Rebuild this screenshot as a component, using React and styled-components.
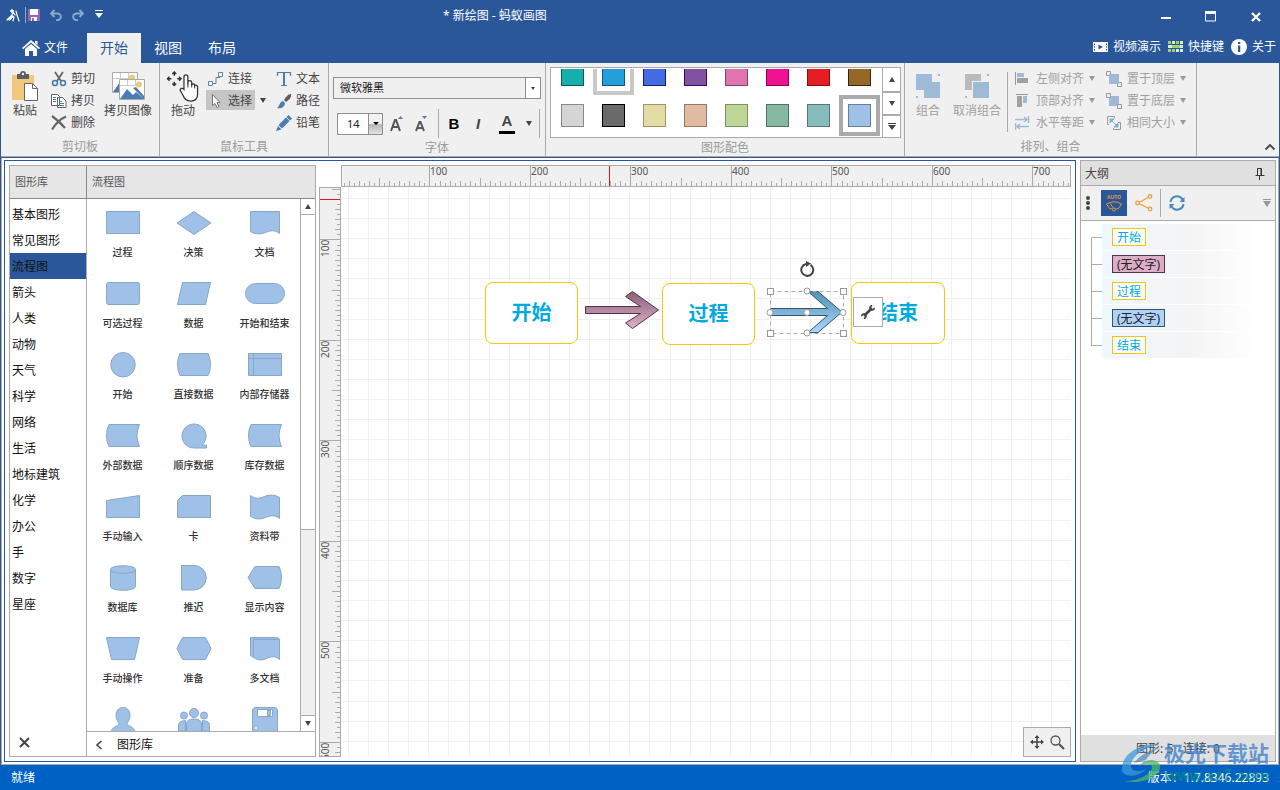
import { useEffect, useState } from "react";
import styled, { createGlobalStyle, css } from "styled-components";

const GlobalStyle = createGlobalStyle`
  *, *::before, *::after {
    box-sizing: border-box;
  }
  body {
    margin: 0;
    background: #fff;
  }
  body, button, select {
    font-family: "Noto Sans", "Noto Sans CJK SC", sans-serif;
    font-size: 12px;
    line-height: 16px;
    color: #444;
  }
  button {
    border: 0;
    padding: 0;
    margin: 0;
    background: none;
    cursor: pointer;
    white-space: nowrap;
  }
  svg {
    display: block;
    flex: none;
  }
`;

const BLUE = "#2a5799";
const LINE = "#ababab";
const FILL = "#a0c1e7";
const FILL_EDGE = "#88a6c8";

const Window = styled.div`
  height: 100vh;
  display: flex;
  flex-direction: column;
  position: relative;
  overflow: hidden;
`;

const Header = styled.header`
  background: ${BLUE};
  color: #fff;
`;

const TitleBar = styled.div`
  height: 33px;
  display: grid;
  grid-template-columns: 443px 1fr auto;
  align-items: center;
`;

const QuickBar = styled.div`
  display: flex;
  align-items: center;
  gap: 10px;
  padding: 0 0 4px 5px;
`;

const QuickGroup = styled.div`
  display: flex;
  align-items: center;
  gap: 2px;
`;

const Divider = styled.span`
  width: 1px;
  height: ${(p) => p.$h}px;
  margin: ${(p) => p.$m || "0"};
  background: ${(p) => p.$color || LINE};
  flex: none;
`;

const Title = styled.h1`
  margin: 0;
  padding-bottom: 2px;
  font-size: 12px;
  font-weight: 400;
`;

const WindowButtons = styled.div`
  display: flex;
  padding-right: 2px;
  button {
    width: 45px;
    height: 33px;
    display: grid;
    place-items: center;
  }
`;

const TabBar = styled.nav`
  display: flex;
  height: 30px;
`;

const FileTab = styled.button`
  width: 87px;
  display: flex;
  align-items: center;
  padding-left: 22px;
  gap: 4px;
  color: #fff;
`;

const Tab = styled.button`
  width: 54px;
  font-size: 14px;
  color: ${(p) => (p.$active ? BLUE : "#fff")};
  background: ${(p) => (p.$active ? "#f0f0f0" : "transparent")};
`;

const HelpLinks = styled.div`
  margin-left: auto;
  display: flex;
  gap: 7px;
  padding: 0 4px 3px 0;
  a {
    display: flex;
    align-items: center;
    gap: 5px;
    color: #fff;
    text-decoration: none;
  }
`;

const Ribbon = styled.section`
  display: flex;
  background: #f0f0f0;
  border: solid ${BLUE};
  border-width: 0 1px;
  box-shadow: inset 0 -2px ${LINE};
  height: 95px;
  padding-bottom: 2px;
  flex: none;
`;

const Group = styled.div`
  width: ${(p) => p.$w}px;
  border-right: 1px solid ${LINE};
  display: flex;
  flex-direction: column;
`;

const GroupBody = styled.div`
  height: 75px;
  display: flex;
  padding: ${(p) => p.$pad || "0 0 0 4px"};
`;

const GroupLabel = styled.div`
  text-align: center;
  color: #9b9b9b;
  line-height: 18px;
  padding-top: 1px;
`;

const BigButton = styled.button`
  width: ${(p) => p.$w}px;
  margin-right: ${(p) => p.$mr || 0}px;
  flex: none;
  display: flex;
  flex-direction: column;
  align-items: center;
  align-self: flex-start;
  padding-top: 8px;
  &:disabled {
    color: #a0a0a0;
  }
`;

const Stack = styled.div`
  display: flex;
  flex-direction: column;
  align-items: flex-start;
  gap: 2px;
  padding-top: 5px;
  margin-right: ${(p) => p.$mr || 0}px;
`;

const StackRow = styled.div`
  display: flex;
  align-items: center;
`;

const SmallButton = styled.button`
  height: 20px;
  display: flex;
  align-items: center;
  gap: ${(p) => p.$gap || 4}px;
  padding: 1px 3px 0 2px;
  background: ${(p) => (p.$active ? "#c5c5c5" : "transparent")};
  &:disabled {
    color: #a0a0a0;
  }
`;

const Caret = styled.span`
  display: inline-block;
  width: ${(p) => 2 * (p.$s || 3)}px;
  border: ${(p) => p.$s || 3}px solid transparent;
  ${(p) =>
    p.$up
      ? css`
          border-top: 0;
          border-bottom: ${p.$h || 5}px solid ${p.$color || "#444"};
        `
      : css`
          border-bottom: 0;
          border-top: ${p.$h || 5}px solid ${p.$color || "#444"};
        `}
`;

const CaretButton = styled.button`
  width: ${(p) => p.$w}px;
  height: 20px;
  line-height: 0;
`;

const FontBody = styled.div`
  display: flex;
  flex-direction: column;
  gap: 10px;
  padding: 14px 4px 0;
  height: 75px;
`;

const Combo = styled.div`
  display: flex;
  width: ${(p) => p.$w}px;
  height: 22px;
  border: 1px solid #8e8e8e;
  select {
    flex: 1;
    appearance: none;
    border: 0;
    outline: 0;
    margin: 0;
    padding: 0 0 0 ${(p) => p.$pad}px;
    font-size: 11px;
    color: #222;
    background: ${(p) => p.$bg};
  }
`;

const ComboArrow = styled.span`
  width: ${(p) => p.$w}px;
  display: grid;
  place-items: center;
  border-left: 1px solid #8e8e8e;
  background: ${(p) => p.$bg};
  pointer-events: none;
`;

const FontRow = styled.div`
  display: flex;
  align-items: center;
  height: 29px;
  padding-left: 4px;
`;

const FontButton = styled.button`
  width: ${(p) => p.$w || 24}px;
  height: 24px;
  display: grid;
  place-items: center;
  font-family: "Liberation Sans", sans-serif;
  font-size: 15px;
  font-weight: 700;
  font-style: ${(p) => (p.$italic ? "italic" : "normal")};
  color: ${(p) => p.$color || "#444"};
`;

const Gallery = styled.div`
  flex: 1;
  display: flex;
  height: 71px;
  border: 1px solid ${LINE};
  background: #fff;
`;

const Swatches = styled.div`
  flex: 1;
  display: grid;
  grid-template-columns: repeat(8, 41px);
  grid-auto-rows: 41px;
  align-content: end;
  margin: 1px;
  overflow: hidden;
`;

const Swatch = styled.button`
  display: grid;
  place-items: center;
  border: 4px solid ${(p) => p.$ring || "transparent"};
  &::before {
    content: "";
    width: 23px;
    height: 23px;
    background: ${(p) => p.$color};
    border: 1px solid ${(p) => p.$edge};
  }
`;

const GalleryScroll = styled.div`
  width: 18px;
  display: grid;
  grid-template-rows: repeat(3, 1fr);
  border-left: 1px solid ${LINE};
  button {
    display: flex;
    flex-direction: column;
    align-items: center;
    justify-content: center;
    gap: 1px;
  }
  button + button {
    border-top: 2px solid ${LINE};
  }
`;

const Collapse = styled.button`
  margin-left: auto;
  width: 18px;
  height: 18px;
  align-self: flex-end;
  display: grid;
  place-items: center;
`;

const Work = styled.main`
  flex: 1;
  min-height: 0;
  display: flex;
  gap: 4px;
  padding: 2px;
  background: #fff;
  border: 1px solid ${LINE};
  border-top: 0;
  margin: 0 1px;
  box-shadow: 0 0 0 1px ${BLUE};
`;

const DocFrame = styled.div`
  flex: 1;
  min-width: 0;
  display: flex;
  gap: 3px;
  padding: 4px;
  border: 1px solid ${BLUE};
`;

const Library = styled.aside`
  width: 307px;
  flex: none;
  display: grid;
  grid-template-columns: 76px 1fr;
  grid-template-rows: 33px 1fr;
  border: 1px solid ${LINE};
`;

const LibraryHead = styled.h2`
  margin: 0;
  padding-left: 5px;
  font-size: 11px;
  font-weight: 400;
  line-height: 32px;
  color: #555;
  background: #e6e6e6;
  border-bottom: 1px solid #8a8a8a;
  & + & {
    border-left: 1px solid #8a8a8a;
  }
`;

const CategoryPane = styled.div`
  display: flex;
  flex-direction: column;
  justify-content: space-between;
  padding-top: 2px;
  min-height: 0;
`;

const Category = styled.button`
  display: block;
  width: 100%;
  height: 26px;
  padding: 2px 0 0 2px;
  text-align: left;
  color: #111;
  background: ${(p) => (p.$active ? BLUE : "transparent")};
`;

const ClosePane = styled.button`
  width: 28px;
  height: 28px;
  display: grid;
  place-items: center end;
  padding-right: 8px;
`;

const ShapePane = styled.div`
  display: flex;
  flex-direction: column;
  min-height: 0;
  border-left: 1px solid ${LINE};
`;

const ShapeArea = styled.div`
  flex: 1;
  min-height: 0;
  display: flex;
`;

const ShapeGrid = styled.div`
  flex: 1;
  display: grid;
  grid-template-columns: repeat(3, 71px);
  grid-auto-rows: 71px;
  overflow: hidden;
`;

const ShapeButton = styled.button`
  display: flex;
  flex-direction: column;
  align-items: center;
  gap: 7px;
  padding-top: 10px;
  font-size: 10px;
  font-weight: 500;
  color: #333;
  svg {
    fill: ${FILL};
    stroke: ${FILL_EDGE};
  }
`;

const ScrollBar = styled.div`
  width: 15px;
  display: flex;
  flex-direction: column;
  border-left: 1px solid ${LINE};
  background: #f0f0f0;
  button {
    height: 15px;
    line-height: 0;
    background: #fff;
  }
`;

const ScrollTrack = styled.div`
  flex: 1;
  border: solid ${LINE};
  border-width: 1px 0;
  &::before {
    content: "";
    display: block;
    height: 63%;
    background: #fff;
    border-bottom: 1px solid ${LINE};
  }
`;

const LibraryFoot = styled.button`
  height: 25px;
  display: flex;
  align-items: center;
  gap: 14px;
  padding: 1px 0 0 8px;
  border-top: 1px solid ${LINE};
  color: #111;
`;

const Editor = styled.div`
  flex: 1;
  min-width: 0;
  display: grid;
  grid-template-columns: 22px 1fr;
  grid-template-rows: 22px 1fr;
`;

const RulerBox = styled.div`
  grid-column: ${(p) => (p.$vertical ? 1 : 2)};
  background: #f0f0f0;
  border: 1px solid ${LINE};
  overflow: hidden;
  min-height: 0;
  text {
    font-size: 10px;
    fill: #555;
  }
`;

const Canvas = styled.div`
  position: relative;
  overflow: hidden;
  min-height: 0;
`;

const CanvasItem = styled.div`
  position: absolute;
  left: ${(p) => p.$x}px;
  top: ${(p) => p.$y}px;
`;

const FlowBox = styled(CanvasItem)`
  width: ${(p) => p.$w || 93}px;
  height: 62px;
  display: grid;
  place-items: center;
  border: 1px solid #f0c808;
  border-radius: 8px;
  background: #fff;
  font-size: 20px;
  line-height: 28px;
  font-weight: 700;
  color: #00aade;
`;

const ToolTag = styled.button`
  position: absolute;
  left: 512px;
  top: 110px;
  width: 30px;
  height: 30px;
  display: grid;
  place-items: center;
  background: #fff;
  border: 1px solid ${LINE};
`;

const ViewTools = styled.div`
  position: absolute;
  right: 0;
  bottom: 0;
  width: 48px;
  height: 30px;
  display: flex;
  align-items: center;
  justify-content: center;
  gap: 6px;
  background: #f0f0f0;
  border: 1px solid ${LINE};
`;

const Outline = styled.aside`
  width: 196px;
  flex: none;
  display: flex;
  flex-direction: column;
  border: 1px solid ${LINE};
`;

const OutlineHead = styled.div`
  height: 25px;
  display: flex;
  align-items: center;
  justify-content: space-between;
  padding: 1px 10px 0 4px;
  background: #e0e0e0;
  border-bottom: 1px solid ${LINE};
  h2 {
    margin: 0;
    font-size: 12px;
    font-weight: 400;
  }
`;

const OutlineTools = styled.div`
  height: 35px;
  display: flex;
  align-items: center;
  background: #f0f0f0;
  border-bottom: 1px solid ${LINE};
  padding: 0 4px;
`;

const ToolButton = styled.button`
  width: 26px;
  height: 26px;
  display: grid;
  place-items: center;
  background: ${(p) => (p.$active ? BLUE : "transparent")};
`;

const Overflow = styled.button`
  margin-left: auto;
  width: 9px;
  display: flex;
  flex-direction: column;
  gap: 1px;
  align-items: center;
  &::before {
    content: "";
    width: 8px;
    height: 1px;
    background: #999;
  }
`;

const Tree = styled.ul`
  flex: 1;
  margin: 0;
  padding: 3px 0 0 10px;
  list-style: none;
`;

const TreeItem = styled.li`
  display: flex;
  height: 27px;
`;

const Branch = styled.span`
  width: 11px;
  display: flex;
  flex-direction: column;
  &::before,
  &::after {
    content: "";
    border-left: 1px solid ${LINE};
  }
  &::before {
    height: 14px;
    border-bottom: 1px solid ${LINE};
  }
  &::after {
    height: 13px;
  }
  ${TreeItem}:first-child &::before,
  ${TreeItem}:last-child &::after {
    border-left-color: transparent;
  }
`;

const TreeRow = styled.div`
  flex: 1;
  height: 26px;
  display: flex;
  align-items: center;
  padding-left: 10px;
  background: linear-gradient(90deg, #f0f8ff, #f4f4f4 50%, #fff 90%);
`;

const Tag = styled.button`
  height: 18px;
  padding: 1px 4px 0;
  line-height: 15px;
  color: ${(p) => p.$text};
  background: ${(p) => p.$bg};
  border: 1px solid ${(p) => p.$edge};
`;

const OutlineFoot = styled.div`
  height: 26px;
  line-height: 28px;
  text-align: center;
  white-space: pre;
  background: #e0e0e0;
`;

const StatusBar = styled.footer`
  height: 25px;
  flex: none;
  display: flex;
  align-items: center;
  justify-content: space-between;
  padding: 0 11px;
  color: #fff;
  background: #0061c4;
`;

const Watermark = styled.div`
  position: absolute;
  right: 11px;
  bottom: 5px;
  display: flex;
  align-items: flex-end;
  pointer-events: none;
`;

const WatermarkText = styled.div`
  text-align: right;
  white-space: nowrap;
  strong {
    display: block;
    font-size: 21px;
    line-height: 28px;
    color: rgba(62, 130, 205, 0.8);
  }
  span {
    display: block;
    font-family: "Liberation Sans", sans-serif;
    font-size: 16px;
    line-height: 18px;
    font-weight: 700;
    color: rgba(0, 145, 130, 0.65);
  }
`;

const Svg = ({ w = 16, h = w, box, children, ...rest }) => (
  <svg
    width={w}
    height={h}
    viewBox={box || `0 0 ${w} ${h}`}
    fill="none"
    aria-hidden="true"
    {...rest}
  >
    {children}
  </svg>
);

const AntIcon = () => (
  <Svg w={16} stroke="#fff" strokeLinecap="round">
    <path d="M6 4l2 1 2 3M8 6l-2 3-4 4M7 9l2 1-1 4M11 4l1 4 2 6" strokeWidth="1.2" />
    <circle cx="7" cy="4" r="1.3" fill="#fff" />
    <path d="M3 12l4-4 1 2-3 3z" fill="#fff" />
  </Svg>
);

const SaveIcon = () => (
  <Svg w={12}>
    <path d="M0 0h12v12H0z" fill="#9b63b5" />
    <path d="M2 0h8v6H2zM3 8h6v4H3z" fill="#fff" />
    <path d="M4 9h2v3H4z" fill="#9b63b5" />
  </Svg>
);

const UndoIcon = ({ flip }) => (
  <Svg w={12} stroke="#8fa9d0" strokeWidth="1.8">
    <g transform={flip ? "matrix(-1 0 0 1 12 0)" : undefined}>
      <path d="M4.5 1L1 4.5 4.5 8M1 4.5h6.5a3.3 3.3 0 0 1 0 6.7H6" />
    </g>
  </Svg>
);

const HomeIcon = () => (
  <Svg w={18} h={16}>
    <path d="M9 0l9 8-1.2 1.3L9 2.6 1.2 9.3 0 8zM13 1h2.5v4L13 3z" fill="#fff" />
    <path d="M9 4l6 5v7h-4v-5H7v5H3V9z" fill="#fff" />
  </Svg>
);

const VideoIcon = () => (
  <Svg w={15} h={12}>
    <path d="M0 1h15v10H0z" fill="#fff" />
    <path d="M1.5 2.5v7M13.5 2.5v7" stroke={BLUE} strokeDasharray="1.5 1.2" />
    <path d="M5.5 3.5l4.5 2.5-4.500 2.500z" fill={BLUE} />
  </Svg>
);

const KeysIcon = () => (
  <Svg w={15} h={12}>
    {[0, 4, 8].map((y, row) =>
      [0, 4, 8, 12].map((x, col) => (
        <rect
          key={`${x}-${y}`}
          x={x}
          y={y}
          width={row === 1 ? 4 : 3}
          height="3"
          fill={col > 2 || (row + col) % 3 === 1 ? "#e3ead9" : "#9fd267"}
        />
      ))
    )}
  </Svg>
);

const InfoIcon = () => (
  <Svg w={16}>
    <circle cx="8" cy="8" r="8" fill="#fff" />
    <path d="M7 6.5h2.3V13H7zM7 3h2.3v2H7z" fill={BLUE} />
  </Svg>
);

const PasteIcon = () => (
  <Svg w={32}>
    <path d="M3 4h22v25H3z" fill="#efc77d" />
    <path d="M8 3h3a3 3 0 0 1 6 0h3v5H8z" fill="#5e5e5e" />
    <circle cx="14" cy="3" r="1.2" fill="#f0f0f0" />
    <path d="M15.5 12.5h8l5 5v12h-13z" fill="#fff" stroke="#666" />
    <path d="M23.5 12.5v5h5" stroke="#666" />
  </Svg>
);

const CutIcon = () => (
  <Svg w={16}>
    <path d="M4 1l6 9M12 1L6 10" stroke="#666" strokeWidth="1.8" />
    <circle cx="4" cy="12" r="2.500" stroke="#4878ad" strokeWidth="1.5" />
    <circle cx="12" cy="12" r="2.500" stroke="#4878ad" strokeWidth="1.5" />
  </Svg>
);

const CopyIcon = () => (
  <Svg w={16} stroke="#666" fill="#fff">
    <path d="M.5 1.5h6l2 2v9h-8zM6.500 4.500h5l3.500 3.500v6.500H6.500z" />
    <path d="M2 4.500h3M2 6.500h3M2 8.500h3M8 8.500h3M8 10.500h5M8 12.500h5" stroke="#4878ad" />
  </Svg>
);

const DeleteIcon = () => (
  <Svg w={16}>
    <path d="M1 1q7 5 13 12M15 1.500Q7 5 1 14.500" stroke="#666" strokeWidth="2.200" />
  </Svg>
);

const PictureCopyIcon = () => (
  <Svg w={34} h={32}>
    {[0, 7].map((o) => (
      <g key={o} transform={`translate(${o} ${o})`}>
        <path d="M1.5 1.5h25v20h-25z" fill="#fff" stroke="#aaa" />
        <path d="M9.5 2v6M17.5 2v5M2 7.5h20" stroke="#ccc" />
        <circle cx="21" cy="6.500" r="3" fill="#efc77d" />
        <path d="M2 21l7-10 6 6 3-3 8 7zM15 10l3-1 8 9v3z" fill="#4a7cb3" />
      </g>
    ))}
  </Svg>
);

const HandIcon = () => (
  <Svg w={34} h={32} box="0 0 34 33">
    <path
      d="M8 1v4M8 11v4M1 8h4M11 8h4M6 3l2-2 2 2M6 13l2 2 2-2M3 6L1 8l2 2M13 6l2 2-2 2"
      stroke="#333"
      strokeWidth="1.500"
    />
    <path
      d="M18 19V6a2 2 0 0 1 4 0v8-2a2 2 0 0 1 4 0v2a2 2 0 0 1 3 0v1a2 2 0 0 1 3 1v8c0 5-3 7-7 7-5 0-7-3-8-6l-3-5c0-2 2-3 4-1z"
      fill="#fff"
      stroke="#333"
      strokeWidth="1.300"
    />
    <path d="M22 13v4M26 14v3M29 15v3" stroke="#333" />
  </Svg>
);

const ConnectIcon = () => (
  <Svg w={16}>
    <path d="M4 12.5h4v-6h4v-2" stroke="#777" />
    <path d="M.5 10.5h4v4h-4zM10.5 1.5h4v4h-4z" fill="#fff" stroke="#4f8cb0" />
  </Svg>
);

const PointerIcon = () => (
  <Svg w={16}>
    <path d="M4.5 1.5v11l2.5-2 2 4 2-1-2-4h3z" fill="#fff" stroke="#777" />
  </Svg>
);

const TextIcon = () => (
  <Svg w={16}>
    <path d="M1.500 5V1.500h13V5M5 14.500h6" stroke="#4a7cb3" strokeWidth="1.200" />
    <path d="M8 2v13" stroke="#4a7cb3" strokeWidth="2" />
  </Svg>
);

const BrushIcon = () => (
  <Svg w={16}>
    <path d="M15 1c1 3-2 6-5 8L8 7c2-3 4-6 7-6z" fill="#5e5e5e" />
    <path d="M7 8l2 2c0 4-4 6-8 5 3-2 2-6 6-7z" fill="#4a7cb3" />
  </Svg>
);

const PencilIcon = () => (
  <Svg w={16}>
    <path d="M12.500 0l3.500 3.500-2 2L10.500 2zM10 2.500L13.500 6 6 13.500 2.500 10zM2 11l3.500 3.500L0 16z" fill="#4a7cb3" />
  </Svg>
);

const FontSizeIcon = ({ up }) => (
  <Svg w={18} h={18}>
    <path
      d={up ? "M3 16L7 5h1l4 11M4.5 12h6" : "M4 16l3.500-9h1L12 16M5 13h6"}
      stroke="#555"
      strokeWidth="2"
    />
    <path d={up ? "M10 4l2.500-3L15 4z" : "M10 1l2.500 3L15 1z"} fill="#4a7cb3" />
  </Svg>
);

const FontColorIcon = () => (
  <Svg w={16} h={4}>
    <path d="M0 0h16v3H0z" fill="#000" />
  </Svg>
);

const GroupIcon = () => (
  <Svg w={24} h={32}>
    <path d="M0 3h16v8h8v16H8v-8H0zM22 3h2v2h-2zM0 25h2v2H0z" fill="#9fbad7" />
  </Svg>
);

const UngroupIcon = () => (
  <Svg w={24} h={32}>
    <path d="M0 3h16v7H7v9H0z" fill="#bbb" />
    <path d="M8 11h16v16H8zM22 3h2v2h-2zM0 25h2v2H0z" fill="#9fbad7" />
  </Svg>
);

const ARRANGE_ICONS = {
  left: (
    <>
      <path d="M.5 1v13" stroke="#999" />
      <path d="M2 2h7v4H2z" fill="#9fbad7" />
      <path d="M2 7h11v5H2z" fill="#a0a0a0" />
    </>
  ),
  top: (
    <>
      <path d="M1 1.5h12" stroke="#999" />
      <path d="M2 3h5v11H2z" fill="#a0a0a0" />
      <path d="M8 3h4v7H8z" fill="#9fbad7" />
    </>
  ),
  space: (
    <path
      d="M0 4.5h12M9 2l3 2.500L9 7M14 11.500H2M5 9l-3 2.500L5 14M13.500 1v7M.5 8v7"
      stroke="#9fbad7"
      strokeWidth="1.500"
    />
  ),
  front: (
    <>
      <path d="M.5.5h4v4h-4zM11.5 11.5h4v4h-4z" stroke="#999" />
      <path d="M3 3h10v10H3z" fill="#9fbad7" />
    </>
  ),
  back: (
    <>
      <path d="M3 3h10v10H3z" fill="#9fbad7" />
      <path d="M.5.5h4v4h-4zM11.5 11.5h4v4h-4z" fill="#f0f0f0" stroke="#999" />
    </>
  ),
  same: (
    <>
      <path d="M8.500 3V1.500H1.500v8H3M12 7.500h2.500v7h-7V13" stroke="#999" />
      <path d="M4 4h4L4 8zM12 12V8l-4 4zM6 6l4 4" fill="#7fb0d8" stroke="#7fb0d8" />
    </>
  ),
};

const RotateIcon = () => (
  <Svg w={16}>
    <path d="M11.5 3.8A6 6 0 1 1 7 3" stroke="#444" strokeWidth="2" />
    <path d="M7 0l5 2.5L7 6z" fill="#444" />
  </Svg>
);

const WrenchIcon = () => (
  <Svg w={16}>
    <path d="M4.500 11.500l7-7" stroke="#444" strokeWidth="2.600" />
    <path
      d="M15 3.500l-2.500 1.200-1.200-1.200L12.500 1C10 .8 8.500 3 9.500 5l1.500 1.500c2 1 4.300-.5 4-3zM1 12.500l2.500-1.200 1.200 1.200L3.500 15c2.500.2 4-2 3-4L5 9.500c-2-1-4.300.5-4 3z"
      fill="#444"
    />
  </Svg>
);

const MoveIcon = () => (
  <Svg w={14}>
    <path d="M7 1v12M1 7h12" stroke="#444" strokeWidth="1.500" />
    <path d="M7 0l2.500 3h-5zM7 14l2.500-3h-5zM0 7l3-2.500v5zM14 7l-3-2.500v5z" fill="#444" />
  </Svg>
);

const LensIcon = () => (
  <Svg w={15} stroke="#555">
    <circle cx="5.5" cy="5.5" r="4.5" strokeWidth="1.300" />
    <path d="M9 9l5 5" strokeWidth="2.200" />
  </Svg>
);

const PinIcon = () => (
  <Svg w={10} h={12} stroke="#333">
    <path d="M2.500 7V.500h4V7M.5 7.500h9M4.500 8v4" />
    <path d="M6 1v6" />
  </Svg>
);

const WiperIcon = () => (
  <Svg w={18} h={20} stroke="#e8923a">
    <path d="M1.500 11q7.500-4.500 15 0l-3 4.500-3 .5M1.500 11l3 4.500 3 .5M5.500 10.500l3.500 6" />
    <circle cx="9" cy="16.500" r="1.500" fill={BLUE} />
    <text x="9" y="6" fontSize="5" fontWeight="700" textAnchor="middle" fill="#e8923a" stroke="none">
      AUTO
    </text>
  </Svg>
);

const ShareIcon = () => (
  <Svg w={18} stroke="#f59a3c" strokeWidth="1.2">
    <path d="M4 8.5L14 3M4 9.5l10 5" />
    <circle cx="2.5" cy="9" r="1.8" />
    <circle cx="15" cy="2.5" r="1.8" />
    <circle cx="15" cy="15" r="1.8" />
  </Svg>
);

const RefreshIcon = () => (
  <Svg w={16} stroke="#4a88c0" strokeWidth="2">
    <path d="M1.5 7a6.5 6.5 0 0 1 12-2.500M14.500 9a6.500 6.500 0 0 1-12 2.500" />
    <path d="M15.500 2v5h-5zM.5 14V9h5z" fill="#4a88c0" stroke="none" />
  </Svg>
);

const FONTS = ["微软雅黑", "宋体", "黑体"];
const SIZES = [12, 14, 16, 18, 20];

const COLORS = [
  ["#18aeac", "#0b5957"],
  ["#259fdc", "#145578", "#c8c8c8"],
  ["#456be2", "#0e1f78"],
  ["#8052a0", "#350a60"],
  ["#e074ae", "#8a3f68"],
  ["#f01391", "#8c0553"],
  ["#e61e24", "#8c0c10"],
  ["#966828", "#3c270a"],
  ["#d6d5d6", "#8a898a"],
  ["#6a6a6a", "#000"],
  ["#e5dba5", "#9b946e"],
  ["#e0baa1", "#93796a"],
  ["#bdd697", "#7e9362"],
  ["#85b8a0", "#507363"],
  ["#87bcbc", "#527979"],
  [FILL, "#66809c", LINE],
];

const CATEGORIES = [
  "基本图形", "常见图形", "流程图", "箭头", "人类", "动物", "天气", "科学",
  "网络", "生活", "地标建筑", "化学", "办公", "手", "数字", "星座",
];

const STORED = "M6 2.5H36.5Q34 8 34 13.5T36.5 24.5H6Q3.5 20 3.5 13.5T6 2.5Z";

const SHAPES = [
  ["过程", "M3.5 2.5h33v22h-33z"],
  ["决策", "M3 14L20 2.5 37 14 20 25.5z"],
  ["文档", "M5.5 2.5h29v22c-5-4-9-3-14-1s-11 2-15-1z"],
  ["可选过程", "M5.5 2.5h29q2 0 2 2v18q0 2-2 2h-29q-2 0-2-2v-18q0-2 2-2z"],
  ["数据", "M8.5 2.5H36.5L31.5 24.5H3.5z"],
  ["开始和结束", "M10.5 3.5h19a10 10 0 0 1 0 20h-19a10 10 0 0 1 0-20z"],
  ["开始", "M20 1.5a12 12 0 0 1 0 24.5a12 12 0 0 1 0-24.5z"],
  ["直接数据", "M6 2.5H34Q36.5 7 36.5 13.5T34 24.5H6Q3.5 20 3.5 13.5T6 2.5Z"],
  ["内部存储器", "M3.5 2.5h33v22h-33zM8.5 2.5v22M3.5 7.5h33"],
  ["外部数据", STORED],
  ["顺序数据", "M28 23h4.5v3H20a12 12 0 1 1 8-3z"],
  ["库存数据", STORED],
  ["手动输入", "M3.5 7.5l33-5v22h-33z"],
  ["卡", "M8.5 2.5h28v22h-33v-17z"],
  ["资料带", "M5.500 2.500c5 4 9 3 14 1s10-2 15 1v21c-5-4-9-3-14-1s-10 2-15-1z"],
  ["数据库", "M7.500 5.500c0-5 25-5 25 0v17c0 5-25 5-25 0zM32.500 5.500c0 5-25 5-25 0"],
  ["推迟", "M7.500 1.500h12.500a12 12 0 0 1 0 24.500h-12.500z"],
  ["显示内容", "M3 13.500L10 2.500H34Q36.500 7 36.500 13.500T34 24.500H10z"],
  ["手动操作", "M3.500 2.500h33l-5 22h-23z"],
  ["准备", "M3 13.500L8.500 2.500h23L37 13.500 31.500 24.500h-23z"],
  ["多文档", "M5.500 2.500h27l2 2v20c-4-4-9-3-13-1s-9 2-13-1l-3-2zM8.500 22V4.500h26"],
  ["用户", "M20 1.500c5 0 7 4 7 8s-2 6-3 8c0 3 8 3 8 9v1H8v-1c0-6 8-6 8-9-1-2-3-4-3-8s2-8 7-8z"],
  ["用户组", "M12.500 27V18q0-5 7.500-5t7.500 5v9zM4.500 25v-6q0-4 7-4.500v10.500zM35.500 25v-6q0-4-7-4.500v10.500zM20 2.500a4.500 4.500 0 0 1 0 9a4.500 4.500 0 0 1 0-9zM10 6a3.500 3.500 0 0 1 0 7a3.500 3.500 0 0 1 0-7zM30 6a3.500 3.500 0 0 1 0 7a3.500 3.500 0 0 1 0-7z"],
  ["软盘", "M9.500 1.500h21l2 2v24h-25v-24z"],
];

const OUTLINE = [
  ["开始", "#00aade", "#fff", "#f0c808"],
  ["(无文字)", "#222", "#dcaec8", "#54324a"],
  ["过程", "#00aade", "#fff", "#f0c808"],
  ["(无文字)", "#222", "#b0d2f8", "#33566f"],
  ["结束", "#00aade", "#fff", "#f0c808"],
];

const UNIT = 1.005;

const useWindowSize = () => {
  const [size, setSize] = useState([window.innerWidth, window.innerHeight]);
  useEffect(() => {
    const update = () => setSize([window.innerWidth, window.innerHeight]);
    window.addEventListener("resize", update);
    return () => window.removeEventListener("resize", update);
  }, []);
  return size;
};

// start is where zero falls, measured from the ruler's own edge
const Ruler = ({ vertical, start, cursor }) => {
  const [width, height] = useWindowSize();
  // the panels and bars round the canvas take this much of the window
  const room = vertical ? height - 222 : width - 552;
  const marks = Array.from(
    { length: Math.ceil((room - start) / UNIT / 5) },
    (_, i) => i * 5
  );
  return (
    <RulerBox $vertical={vertical}>
      <svg width="100%" height="100%" shapeRendering="crispEdges">
        {marks.map((n) => {
          const pos = Math.round(start + n * UNIT) + 0.5;
          const len = n % 100 === 0 ? 20 : n % 50 === 0 ? 8 : n % 10 === 0 ? 5 : 3;
          const d = vertical ? `M${20 - len} ${pos}H20` : `M${pos} ${20 - len}V20`;
          return <path key={n} d={d} stroke={LINE} />;
        })}
        {marks
          .filter((n) => n > 0 && n % 100 === 0)
          .map((n) => {
            const pos = Math.round(start + n * UNIT);
            return vertical ? (
              <text key={n} transform={`translate(9 ${pos + 18}) rotate(-90)`}>
                {n}
              </text>
            ) : (
              <text key={n} x={pos + 1} y="9">
                {n}
              </text>
            );
          })}
        <path
          d={vertical ? `M0 ${cursor + 0.5}H20` : `M${cursor + 0.5} 0V20`}
          stroke="#e81123"
        />
      </svg>
    </RulerBox>
  );
};

const CanvasGrid = () => {
  const lines = Array.from({ length: 130 }, (_, i) => i * 20 * UNIT);
  return (
    <svg width="100%" height="100%" shapeRendering="crispEdges" stroke="#f0f0f0">
      {lines.map((n) => (
        <g key={n}>
          <line x1={Math.round(7 + n) + 0.5} x2={Math.round(7 + n) + 0.5} y1="0" y2="100%" />
          <line y1={Math.round(11 + n) + 0.5} y2={Math.round(11 + n) + 0.5} x1="0" x2="100%" />
        </g>
      ))}
    </svg>
  );
};

const PinkArrow = () => (
  <Svg w={76} h={40}>
    <defs>
      <linearGradient id="pink" x1="0" y1="0" x2="0" y2="1">
        <stop offset="0" stopColor="#87607a" />
        <stop offset="1" stopColor="#dfb0c9" />
      </linearGradient>
    </defs>
    <path
      d="M1.5 15.5h55l-15-10 7-5L74.5 19l-26 18.5-7-5.5 15-9.5h-55z"
      fill="url(#pink)"
      stroke="#54324a"
    />
  </Svg>
);

const SelectedArrow = () => (
  <Svg w={82} h={50}>
    <defs>
      <linearGradient id="sky" x1="0" y1="0" x2="0" y2="1">
        <stop offset="0" stopColor="#4d92b8" />
        <stop offset="1" stopColor="#b0d6fb" />
      </linearGradient>
    </defs>
    <path
      d="M4.5 21.5h57L42 4.5h10L76 25 52 45.5H42l19.5-17h-57z"
      fill="url(#sky)"
      stroke="#33566f"
    />
    <path d="M4.5 4.5h73v42h-73z" stroke={LINE} strokeDasharray="4 3" />
    <g fill="#fff" stroke="#999">
      {[
        [1, 1],
        [74, 1],
        [1, 43],
        [74, 43],
      ].map(([x, y]) => (
        <rect key={`${x}-${y}`} x={x + 0.5} y={y + 0.5} width="6" height="6" />
      ))}
      {[
        [4, 25.5],
        [41, 4],
        [41, 25.5],
        [77, 25.5],
        [41, 46],
      ].map(([x, y]) => (
        <circle key={`${x}-${y}`} cx={x} cy={y} r="3" />
      ))}
    </g>
  </Svg>
);

const ArrangeButton = ({ icon, children }) => (
  <SmallButton disabled $gap={5}>
    <Svg>{ARRANGE_ICONS[icon]}</Svg>
    {children}
    <Caret $color="#999" />
  </SmallButton>
);

const RibbonBar = () => (
  <Ribbon>
    <Group $w={159}>
      <GroupBody>
        <BigButton $w={40} $mr={4}>
          <PasteIcon />
          粘贴
        </BigButton>
        <Stack $mr={2}>
          <SmallButton><CutIcon />剪切</SmallButton>
          <SmallButton><CopyIcon />拷贝</SmallButton>
          <SmallButton><DeleteIcon />删除</SmallButton>
        </Stack>
        <BigButton $w={56}>
          <PictureCopyIcon />
          拷贝图像
        </BigButton>
      </GroupBody>
      <GroupLabel>剪切板</GroupLabel>
    </Group>

    <Group $w={169}>
      <GroupBody $pad="0 3px">
        <BigButton $w={40} $mr={3}>
          <HandIcon />
          拖动
        </BigButton>
        <Stack $mr={3}>
          <SmallButton><ConnectIcon />连接</SmallButton>
          <StackRow>
            <SmallButton $active><PointerIcon />选择</SmallButton>
            <CaretButton $w={16} aria-label="选择方式"><Caret /></CaretButton>
          </StackRow>
        </Stack>
        <Stack>
          <SmallButton><TextIcon />文本</SmallButton>
          <SmallButton><BrushIcon />路径</SmallButton>
          <SmallButton><PencilIcon />铅笔</SmallButton>
        </Stack>
      </GroupBody>
      <GroupLabel>鼠标工具</GroupLabel>
    </Group>

    <Group $w={217}>
      <FontBody>
        <Combo $w={208} $pad={6} $bg="#f0f0f0">
          <select aria-label="字体">
            {FONTS.map((f) => <option key={f}>{f}</option>)}
          </select>
          <ComboArrow $w={15} $bg="#fff"><Caret $s={2} $h={3} /></ComboArrow>
        </Combo>
        <FontRow>
          <Combo $w={46} $pad={9} $bg="#fff">
            <select aria-label="字号" defaultValue={14}>
              {SIZES.map((s) => <option key={s}>{s}</option>)}
            </select>
            <ComboArrow $w={14} $bg="linear-gradient(#f2f2f2 48%, #b5b5b5 52%, #e4e4e4)">
              <Caret $s={3} $h={3} $color="#000" />
            </ComboArrow>
          </Combo>
          <Divider $h={0} $m="0 1px 0 0" />
          <FontButton aria-label="增大字号"><FontSizeIcon up /></FontButton>
          <FontButton aria-label="减小字号"><FontSizeIcon /></FontButton>
          <Divider $h={29} $m="0 3px 0 5px" />
          <FontButton $color="#000">B</FontButton>
          <FontButton $italic>I</FontButton>
          <FontButton $w={34}>
            A
            <FontColorIcon />
          </FontButton>
          <CaretButton $w={10} aria-label="字体颜色"><Caret /></CaretButton>
          <Divider $h={29} $m="0 0 0 5px" />
        </FontRow>
      </FontBody>
      <GroupLabel>字体</GroupLabel>
    </Group>

    <Group $w={359}>
      <GroupBody $pad="4px 3px 0 4px">
        <Gallery>
          <Swatches>
            {COLORS.map(([color, edge, ring]) => (
              <Swatch key={color} $color={color} $edge={edge} $ring={ring} aria-label={color} />
            ))}
          </Swatches>
          <GalleryScroll>
            <button aria-label="上一行"><Caret $up /></button>
            <button aria-label="下一行"><Caret /></button>
            <button aria-label="更多颜色">
              <Svg w={8} h={1}><path d="M0 0h8v1H0z" fill="#444" /></Svg>
              <Caret $s={4} />
            </button>
          </GalleryScroll>
        </Gallery>
      </GroupBody>
      <GroupLabel>图形配色</GroupLabel>
    </Group>

    <Group $w={292}>
      <GroupBody $pad="0 5px">
        <BigButton disabled $w={36} $mr={4}>
          <GroupIcon />
          组合
        </BigButton>
        <BigButton disabled $w={54}>
          <UngroupIcon />
          取消组合
        </BigButton>
        <Divider $h={60} $m="9px 5px 0 3px" />
        <Stack $mr={6}>
          <ArrangeButton icon="left">左侧对齐</ArrangeButton>
          <ArrangeButton icon="top">顶部对齐</ArrangeButton>
          <ArrangeButton icon="space">水平等距</ArrangeButton>
        </Stack>
        <Stack>
          <ArrangeButton icon="front">置于顶层</ArrangeButton>
          <ArrangeButton icon="back">置于底层</ArrangeButton>
          <ArrangeButton icon="same">相同大小</ArrangeButton>
        </Stack>
      </GroupBody>
      <GroupLabel>排列、组合</GroupLabel>
    </Group>

    <Collapse aria-label="折叠功能区">
      <Svg w={12} h={8}><path d="M1.5 6.5L6 2l4.5 4.5" stroke="#444" strokeWidth="1.8" /></Svg>
    </Collapse>
  </Ribbon>
);

const ShapeLibrary = () => {
  const [active, setActive] = useState("流程图");
  return (
    <Library>
      <LibraryHead>图形库</LibraryHead>
      <LibraryHead>{active}</LibraryHead>
      <CategoryPane>
        <div>
          {CATEGORIES.map((name) => (
            <Category key={name} $active={name === active} onClick={() => setActive(name)}>
              {name}
            </Category>
          ))}
        </div>
        <ClosePane aria-label="关闭">
          <Svg w={11}><path d="M1 1l9 9M10 1l-9 9" stroke="#444" strokeWidth="2" /></Svg>
        </ClosePane>
      </CategoryPane>
      <ShapePane>
        <ShapeArea>
          <ShapeGrid>
            {SHAPES.map(([name, d], i) => (
              <ShapeButton key={name} aria-label={name}>
                <svg width="40" height="28" viewBox="0 0 40 28" aria-hidden="true">
                  <path d={d} />
                  {name === "软盘" && (
                    <>
                      <path d="M12.5 3.5h15v7h-15z" fill="#fff" />
                      <path d="M22.5 4.500h3v5h-3z" />
                      <circle cx="11" cy="22" r="1" fill="#fff" stroke="none" />
                    </>
                  )}
                </svg>
                {i < 21 && name}
              </ShapeButton>
            ))}
          </ShapeGrid>
          <ScrollBar>
            <button aria-label="向上滚动"><Caret $up /></button>
            <ScrollTrack />
            <button aria-label="向下滚动"><Caret /></button>
          </ScrollBar>
        </ShapeArea>
        <LibraryFoot>
          <Svg w={8} h={10}><path d="M6.5 1L2 5l4.5 4" stroke="#444" strokeWidth="1.6" /></Svg>
          图形库
        </LibraryFoot>
      </ShapePane>
    </Library>
  );
};

const DrawingArea = () => (
  <Editor>
    <Ruler start={-13} cursor={267} />
    <Ruler vertical start={-49} cursor={11} />
    <Canvas>
      <CanvasGrid />
      <FlowBox $x={144} $y={95}>开始</FlowBox>
      <CanvasItem $x={243} $y={104}><PinkArrow /></CanvasItem>
      <FlowBox $x={321} $y={96}>过程</FlowBox>
      <FlowBox $x={510} $y={95} $w={94}>结束</FlowBox>
      <CanvasItem $x={425} $y={100}><SelectedArrow /></CanvasItem>
      <CanvasItem $x={458} $y={74}><RotateIcon /></CanvasItem>
      <ToolTag aria-label="设置"><WrenchIcon /></ToolTag>
      <ViewTools>
        <button aria-label="平移"><MoveIcon /></button>
        <button aria-label="缩放"><LensIcon /></button>
      </ViewTools>
    </Canvas>
  </Editor>
);

const OutlinePanel = () => (
  <Outline>
    <OutlineHead>
      <h2>大纲</h2>
      <button aria-label="固定"><PinIcon /></button>
    </OutlineHead>
    <OutlineTools>
      <Svg w={6} h={16} fill="#444">
        <circle cx="3" cy="3" r="2" />
        <circle cx="3" cy="8" r="2" />
        <circle cx="3" cy="13" r="2" />
      </Svg>
      <Divider $h={0} $m="0 9px 0 0" />
      <ToolButton $active aria-label="自动"><WiperIcon /></ToolButton>
      <Divider $h={0} $m="0 3px 0 0" />
      <ToolButton aria-label="结构"><ShareIcon /></ToolButton>
      <Divider $h={28} $m="0 3px" />
      <ToolButton aria-label="刷新"><RefreshIcon /></ToolButton>
      <Overflow aria-label="更多"><Caret $s={4} $h={6} $color="#999" /></Overflow>
    </OutlineTools>
    <Tree>
      {OUTLINE.map(([name, text, bg, edge]) => (
        <TreeItem key={name + bg}>
          <Branch />
          <TreeRow>
            <Tag $text={text} $bg={bg} $edge={edge}>{name}</Tag>
          </TreeRow>
        </TreeItem>
      ))}
    </Tree>
    <OutlineFoot>{"图形: 5   连接: 0"}</OutlineFoot>
  </Outline>
);

const App = () => {
  const [tab, setTab] = useState("开始");
  return (
    <Window>
      <GlobalStyle />
      <Header>
        <TitleBar>
          <QuickBar>
            <QuickGroup>
              <AntIcon />
              <Divider $h={16} $m="0 0 0 2px" $color="#8fa9d0" />
              <button aria-label="保存"><SaveIcon /></button>
            </QuickGroup>
            <button aria-label="撤销"><UndoIcon /></button>
            <button aria-label="重做"><UndoIcon flip /></button>
            <button aria-label="自定义">
              <Svg w={10} h={9} fill="#fff"><path d="M1 0h8v1H1zM1 3h8L5 8z" /></Svg>
            </button>
          </QuickBar>
          <Title>* 新绘图 - 蚂蚁画图</Title>
          <WindowButtons>
            <button aria-label="最小化">
              <Svg w={10}><path d="M0 5h10v2H0z" fill="#fff" /></Svg>
            </button>
            <button aria-label="最大化">
              <Svg w={11}><path d="M.5 1v9h10V1" stroke="#fff" /><path d="M0 0h11v3H0z" fill="#fff" /></Svg>
            </button>
            <button aria-label="关闭">
              <Svg w={10}><path d="M1 1l8 8M9 1L1 9" stroke="#fff" strokeWidth="2.4" /></Svg>
            </button>
          </WindowButtons>
        </TitleBar>
        <TabBar>
          <FileTab><HomeIcon />文件</FileTab>
          {["开始", "视图", "布局"].map((name) => (
            <Tab key={name} $active={name === tab} onClick={() => setTab(name)}>
              {name}
            </Tab>
          ))}
          <HelpLinks>
            <a href="#video"><VideoIcon />视频演示</a>
            <a href="#keys"><KeysIcon />快捷键</a>
            <a href="#about"><InfoIcon />关于</a>
          </HelpLinks>
        </TabBar>
      </Header>
      <RibbonBar />
      <Work>
        <DocFrame>
          <ShapeLibrary />
          <DrawingArea />
        </DocFrame>
        <OutlinePanel />
      </Work>
      <StatusBar>
        <span>就绪</span>
        <span>版本：1.7.8346.22893</span>
      </StatusBar>
      <Watermark>
        <Svg w={44} h={44}>
          <path d="M2 30C0 16 16 2 40 3 26 6 12 14 11 24c-1 6 8 8 15 4-6 8-22 9-24 2z" fill="#3d9ad8" fillOpacity=".75" />
          <path d="M4 40c14 0 26-6 28-13 1-5-7-5-13-2 6-8 21-8 21 1 0 10-18 18-36 14z" fill="#4fb56a" fillOpacity=".75" />
          <path d="M14 22c6-8 14-12 24-15-6 4-10 8-12 12z" fill="#2f78b8" fillOpacity=".6" />
        </Svg>
        <WatermarkText>
          <strong>极光下载站</strong>
          <span>www.xz7.com</span>
        </WatermarkText>
      </Watermark>
    </Window>
  );
};

export default App;
